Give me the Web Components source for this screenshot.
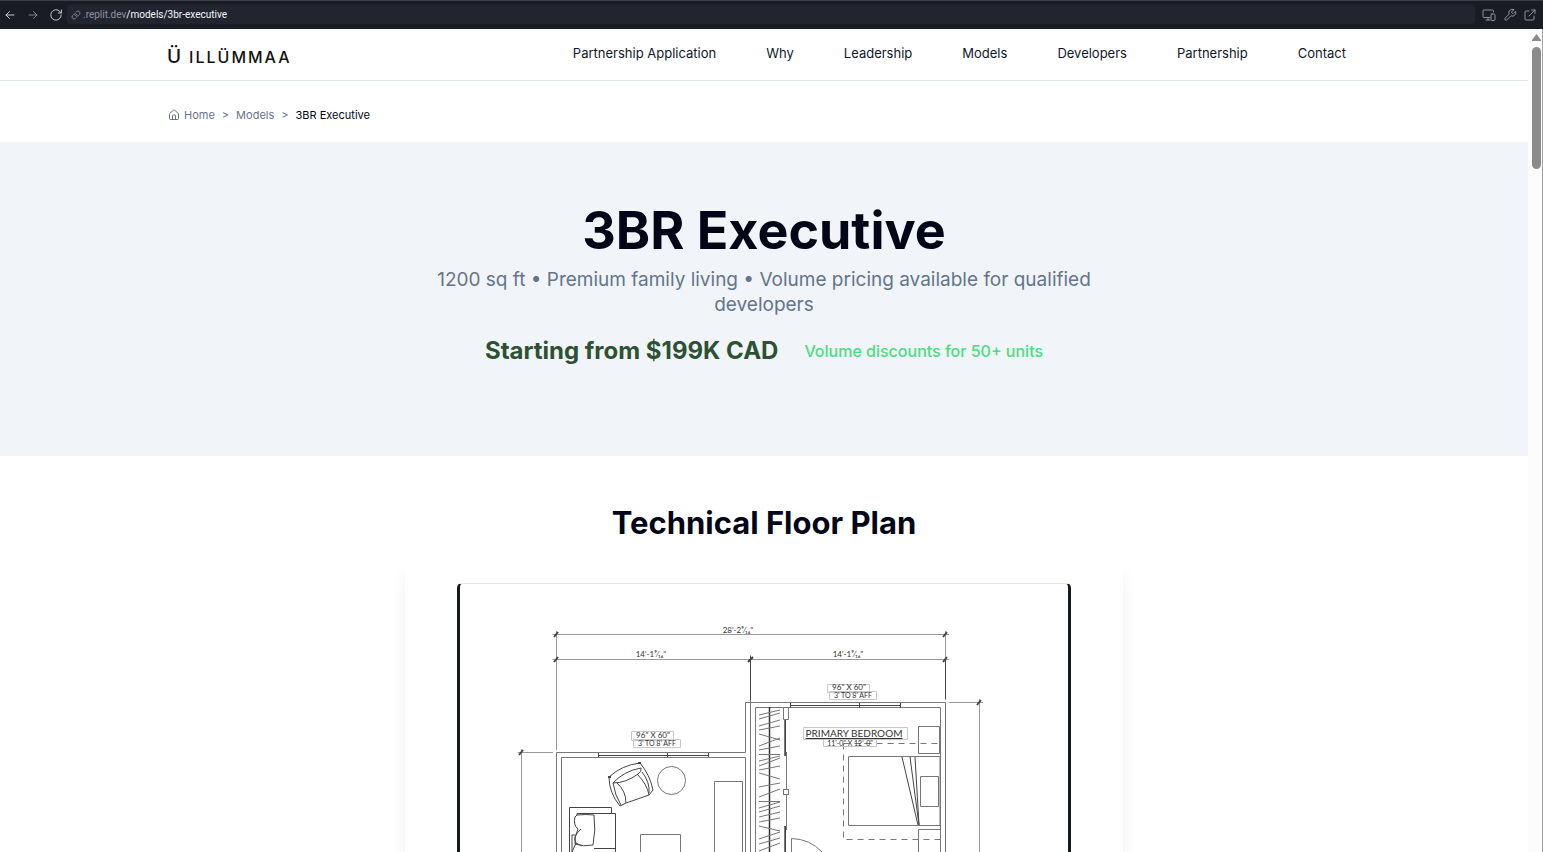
<!DOCTYPE html>
<html lang="en">
<head>
<meta charset="utf-8">
<title>3BR Executive - ILLÜMMAA</title>
<style>
body { margin: 0; background: #fff; color: #020617; font-family: Inter, "Liberation Sans", sans-serif; }
</style>
</head>
<body>
<preview-window>
  <browser-bar slot="bar" domain=".replit.dev" path="/models/3br-executive"></browser-bar>
  <site-header>
    <nav-link href="#apply">Partnership Application</nav-link>
    <nav-link href="#why">Why</nav-link>
    <nav-link href="#leadership">Leadership</nav-link>
    <nav-link href="#models">Models</nav-link>
    <nav-link href="#developers">Developers</nav-link>
    <nav-link href="#partnership">Partnership</nav-link>
    <nav-link href="#contact">Contact</nav-link>
  </site-header>
  <bread-crumbs></bread-crumbs>
  <model-hero>
    <span slot="title">3BR Executive</span>
    <span slot="summary">1200 sq ft • Premium family living • Volume pricing available for qualified developers</span>
    <span slot="price">Starting from $199K CAD</span>
    <span slot="note">Volume discounts for 50+ units</span>
  </model-hero>
  <plan-section>
    <span slot="title">Technical Floor Plan</span>
    <floor-plan></floor-plan>
  </plan-section>
</preview-window>
<script>
const define = (name, html, ready) => {
  const template = document.createElement('template');
  template.innerHTML = html;
  customElements.define(name, class extends HTMLElement {
    constructor() {
      super();
      this.attachShadow({ mode: 'open' }).append(template.content.cloneNode(true));
    }
    connectedCallback() { if (ready) ready(this, this.shadowRoot); }
  });
};

define('preview-window', `
<style>
:host { display: flex; flex-direction: column; height: 100vh; overflow: hidden; }
.view { flex: 1; min-height: 0; display: grid; grid-template-columns: minmax(0, 1fr) 15px; }
main { overflow: hidden; }
</style>
<slot name="bar"></slot>
<div class="view"><main><slot></slot></main><scroll-track></scroll-track></div>`);

define('scroll-track', `
<style>
:host { display: flex; flex-direction: column; align-items: center; gap: 6px; padding: 5px 0 0 3px; box-sizing: border-box; background: #fcfcfc; border-right: 1px solid #a3a3a3; }
svg { display: block; }
.thumb { width: 9px; height: 122px; border-radius: 5px; background: #8b8b8b; }
</style>
<svg width="9" height="7" viewBox="0 0 9 7"><path d="M4.5 0 9 6V7H0V6Z" fill="#8b8b8b"/></svg>
<div class="thumb"></div>`);

define('browser-bar', `
<style>
:host { display: flex; align-items: center; height: 29px; box-sizing: border-box; padding: 0 7px 1px 3px; border-top: 1px solid #3b3f4a; background: #191b25; color: #c2c8cc; }
button { display: flex; align-items: center; margin: 0; padding: 0; border: 0; background: none; color: inherit; font: inherit; }
.nav { display: flex; gap: 9px; margin-right: 4px; }
svg { display: block; fill: none; stroke: currentColor; stroke-width: 1; stroke-linecap: round; stroke-linejoin: round; }
.dim { color: #7c8290; }
.address { flex: 1; height: 19px; padding: 0 4px; gap: 2px; border-radius: 3px; background: #22252f; font-family: Roboto, sans-serif; font-size: 10px; color: #8d93a0; text-align: left; }
.address b { color: #f5f9fc; font-weight: 400; }
.tools { display: flex; gap: 7px; margin-left: 7px; color: #8d93a0; }
</style>
<div class="nav">
  <button aria-label="Back"><svg width="14" height="14" viewBox="0 0 14 14"><path d="M11 7H3M6.500 3.500 3 7l3.500 3.500"/></svg></button>
  <button class="dim" aria-label="Forward"><svg width="14" height="14" viewBox="0 0 14 14"><path d="M3 7h8M7.500 3.500 11 7l-3.500 3.500"/></svg></button>
  <button aria-label="Reload"><svg width="14" height="14" viewBox="0 0 14 14"><path d="M12.200 7a5.200 5.200 0 1 1-1.500-3.700L12.300 5M12.400 2v3h-3"/></svg></button>
</div>
<button class="address" aria-label="Address">
  <svg width="10" height="10" viewBox="0 0 24 24" style="stroke-width:2"><path d="M10 13a5 5 0 0 0 7.500.5l3-3a5 5 0 0 0-7-7l-1.700 1.700M14 11a5 5 0 0 0-7.500-.5l-3 3a5 5 0 0 0 7 7l1.700-1.700"/></svg>
  <span><span class="domain"></span><b></b></span>
</button>
<div class="tools">
  <button aria-label="Devices"><svg width="14" height="14" viewBox="0 0 14 14"><path d="M8 9.500H2a1 1 0 0 1-1-1V3a1 1 0 0 1 1-1h8.500a1 1 0 0 1 1 1v1M4 12h4M6 9.500V12"/><rect x="9" y="6" width="4" height="6.500" rx="1"/></svg></button>
  <button aria-label="Tools"><svg width="14" height="14" viewBox="0 0 24 24" style="stroke-width:1.700"><path d="M14.700 6.300a1 1 0 0 0 0 1.400l1.600 1.600a1 1 0 0 0 1.400 0l3.770-3.770a6 6 0 0 1-7.940 7.940l-6.910 6.910a2.120 2.120 0 0 1-3-3l6.910-6.910a6 6 0 0 1 7.940-7.940z"/></svg></button>
  <button aria-label="Open in a new tab"><svg width="12" height="14" viewBox="0 0 12 14"><path d="M5 3H2a1 1 0 0 0-1 1v7a1 1 0 0 0 1 1h7a1 1 0 0 0 1-1V8M7.500 2H11v3.500M11 2 5 8"/></svg></button>
</div>`, (host, root) => {
  root.querySelector('.domain').textContent = host.getAttribute('domain');
  root.querySelector('b').textContent = host.getAttribute('path');
});

define('site-header', `
<style>
:host { display: block; border-bottom: 1px solid #e2e8f0; }
.inner { display: flex; justify-content: space-between; max-width: 1194px; height: 51px; margin: 0 auto; }
.logo { display: flex; align-items: baseline; gap: 8px; padding-top: 14px; color: #111; text-decoration: none; font-size: 16px; font-weight: 500; line-height: 28px; letter-spacing: 2px; }
.logo .mark { font-size: 19px; letter-spacing: 0; }
nav { display: flex; gap: 50px; padding: 13px 15px 0 0; }
</style>
<div class="inner">
  <a class="logo" href="#home"><span class="mark">Ü</span><span>ILLÜMMAA</span></a>
  <nav><slot></slot></nav>
</div>`);

define('nav-link', `
<style>
:host { display: block; }
a { color: #0f172a; text-decoration: none; font-size: 13px; line-height: 20px; white-space: nowrap; }
</style>
<a><slot></slot></a>`, (host, root) => { root.querySelector('a').href = host.getAttribute('href'); });

define('bread-crumbs', `
<style>
:host { display: block; }
nav { display: flex; align-items: center; gap: 7px; max-width: 1192px; height: 61px; box-sizing: border-box; margin: 0 auto; padding-top: 7px; font-size: 11px; color: #64748b; }
a { display: flex; align-items: center; gap: 4px; color: inherit; text-decoration: none; }
svg { fill: none; stroke: currentColor; stroke-width: 2; stroke-linecap: round; stroke-linejoin: round; }
[aria-current] { color: #020617; }
</style>
<nav aria-label="Breadcrumb">
  <a href="#home"><svg width="12" height="12" viewBox="0 0 24 24"><path d="M15 21v-8a1 1 0 0 0-1-1h-4a1 1 0 0 0-1 1v8"/><path d="M3 10a2 2 0 0 1 .7-1.500l7-6a2 2 0 0 1 2.600 0l7 6A2 2 0 0 1 21 10v9a2 2 0 0 1-2 2H5a2 2 0 0 1-2-2z"/></svg>Home</a>
  <span>&gt;</span><a href="#models">Models</a><span>&gt;</span><span aria-current="page">3BR Executive</span>
</nav>`);

define('model-hero', `
<style>
:host { display: block; padding: 60px 24px 89px; background: #f1f5f9; text-align: center; }
h1 { margin: 0 0 8px; font-size: 52px; line-height: 57px; font-weight: 700; }
p { max-width: 716px; margin: 0 auto; color: #64748b; font-size: 19px; line-height: 25px; }
.offer { display: flex; justify-content: center; align-items: center; gap: 26px; margin-top: 18px; line-height: 32px; }
.price { color: #2d5132; font-size: 24px; font-weight: 700; }
.note { color: #4ade80; font-size: 16px; font-weight: 500; }
</style>
<h1><slot name="title"></slot></h1>
<p><slot name="summary"></slot></p>
<div class="offer"><span class="price"><slot name="price"></slot></span><span class="note"><slot name="note"></slot></span></div>`);

define('plan-section', `
<style>
:host { display: block; padding: 48px 24px; text-align: center; }
h2 { margin: 0 0 16px; font-size: 31px; line-height: 38px; font-weight: 700; }
.card { max-width: 718px; box-sizing: border-box; margin: 0 auto; padding: 25px 52px; border-radius: 12px; background: #fff; box-shadow: 0 12px 16px rgba(0, 0, 0, .06); }
</style>
<h2><slot name="title"></slot></h2>
<div class="card"><slot></slot></div>`);

define('floor-plan', `
<style>
:host { display: block; border: solid #16191d; border-width: 1px 3px; border-top-color: #e2e8f0; border-radius: 5px; overflow: hidden; }
svg { display: block; width: 100%; fill: none; stroke: #777; stroke-width: 1; }
text { fill: #333; stroke: none; font-family: Lato, sans-serif; font-size: 8px; text-anchor: middle; }
.small { font-size: 7px; }
.room { font-size: 10px; text-decoration: underline; }
.dark { stroke: #444; }
.light { stroke: #c8c8c8; }
.soft { stroke: #999; }
.hatch { stroke: #777; }
</style>
<svg viewBox="460 584 608 440" role="img" aria-label="Floor plan of the 3BR Executive">
  <g class="soft">
    <path d="M552.500 634.500H949M552.500 659.500H949M556.500 631V750M750.500 655V703M945.500 631V700M949 702.500H983M979.500 699V1024M518 752.500H553M521.500 749V1024"/>
  </g>
  <path class="dark" d="M750.500 656V750M945.500 658V699"/>
  <g class="dark" stroke-width="2"><path d="m554 637 4-5m-4 30 4-5m190 5 5-5m190 5 4-5m-4-20 4-5m30 73 4-5M519 755l4-5"/></g>
  <path d="M556.500 1024V752.500H745.500V702.500H945.500V1024M561.500 1024V757.500H745.500V1024M750.500 700V1024M755.500 1024V707.500H940.500V1024"/>
  <path class="dark" d="M598.500 753V757M598 755.500H709M667.500 753V757M708.500 753V757M790.500 703V708M790 705.500H901M859.500 703V708M900.500 703V708"/>

  <g id="armchair" class="dark">
    <path d="M609 777Q622 765 640 763Q650 775 653 790L649 795L626 803L620 806Q609 793 609 777ZM613 783Q624 771 641 768M613 783Q626 783 638 774Q642 772 641 768M613 783Q615 796 621 805M617 783Q626 791 626 803M637 774Q647 784 649 795M642 772Q650 782 649 793"/>
    <path d="M608 777h3M638 763h3" stroke-width="2"/>
  </g>
  <circle cx="671.500" cy="780.500" r="14"/>
  <g class="dark">
    <path d="M569.500 852V807.500H611.500V813M577 815V813.500H615.500V852M594 848.500H615M577 815Q586 814 594 815Q596 830 593 845Q583 847 575 844Q574 837 578 829Q573 825 575 817ZM572 852V835h3M581 829Q572 837 576 843L572 852M576 843L582 846"/>
  </g>
  <path d="M640.500 1024V834.500H680.500V1024M714.500 1024V781.500H742.500V1024"/>

  <path d="M769.500 707V1024" stroke="#333" stroke-width="1.500"/>
  <path class="hatch" d="M759 715l21-5M759 719l21-6M759 726l21-6M759 730l21-4M759 734l21 6M759 746l21-8M759 750l21-4M759 754.500h21M759 761l21-5M759 766l21-8M759 770l21-4M759 773l21 6M759 787l21-4M759 797l21-8M759 801.500h21M759 808l21-6M759 812l21-6M759 817l21-5M759 822l21-4M759 826l21 5M759 839l21-7M759 844l21-6M759 851l21-8"/>
  <path d="M783.500 708V719.500H788.500V707M784.500 720V756M786.500 752V830M784.500 826V852M791.500 852V838.500Q810 839 822 852"/>
  <path class="dark" d="M785.500 720V756M785.500 826V852" />
  <rect x="783.500" y="789.500" width="5" height="5" fill="#fff"/>

  <path d="M918.500 726.500H939.500V753.500H918.500zM848.500 756.500H940V825.500H848.500zM920.500 776.500H938.500V806.500H920.500zM918.500 1024V829.500H940"/>
  <path class="dark" d="M902 757l16 68M910 757l9 68M915 757l4 68"/>
  <path d="M843.500 743.500H940.500M843.500 743.500V839.500H940.500V743.500" stroke-dasharray="6 5"/>

  <g class="light"><path d="M631.500 731.500H673.500V740.500H631.500zM633.500 739.500H680.500V747.500H633.500zM827.500 684.500H869.500V692.500H827.500zM829.500 691.500H876.500V699.500H829.500zM803.500 727.500H907.500V739.500H803.500zM823.500 739.500H876.500V746.500H823.500z"/></g>
  <text x="738" y="633">28'-2⁹⁄₁₆"</text>
  <text x="651" y="657">14'-1⁹⁄₁₆"</text>
  <text x="848" y="657">14'-1⁹⁄₁₆"</text>
  <text x="653" y="738">96" X 60"</text>
  <text class="small" x="657" y="746">3' TO 8' AFF</text>
  <text x="849" y="690">96" X 60"</text>
  <text class="small" x="853" y="698">3' TO 8' AFF</text>
  <text class="room" x="854" y="737">PRIMARY BEDROOM</text>
  <text class="small" x="850" y="746">11'-0" X 12'-0"</text>
</svg>`);
</script>
</body>
</html>
